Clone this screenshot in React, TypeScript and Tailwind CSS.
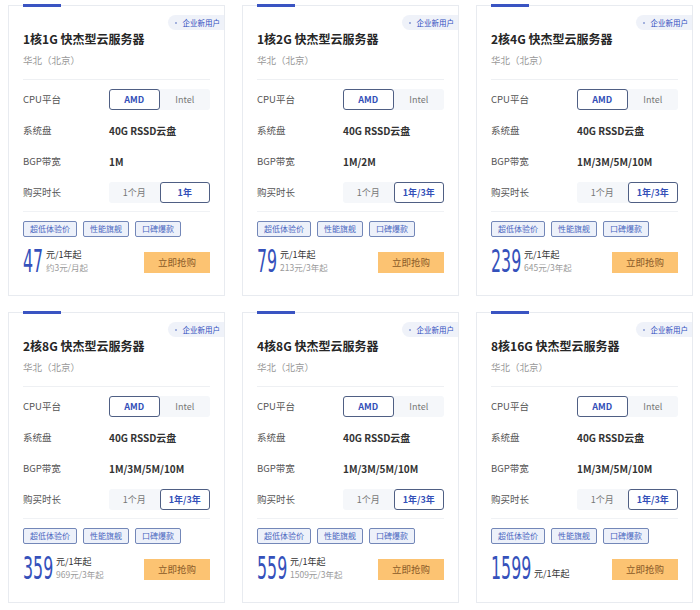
import React from "react";

type Plan = {
  title: string;
  bandwidth: string;
  term: string;
  price: string;
  sub: string;
};

const plans: Plan[] = [
  { title: "1核1G 快杰型云服务器", bandwidth: "1M", term: "1年", price: "47", sub: "约3元/月起" },
  { title: "1核2G 快杰型云服务器", bandwidth: "1M/2M", term: "1年/3年", price: "79", sub: "213元/3年起" },
  { title: "2核4G 快杰型云服务器", bandwidth: "1M/3M/5M/10M", term: "1年/3年", price: "239", sub: "645元/3年起" },
  { title: "2核8G 快杰型云服务器", bandwidth: "1M/3M/5M/10M", term: "1年/3年", price: "359", sub: "969元/3年起" },
  { title: "4核8G 快杰型云服务器", bandwidth: "1M/3M/5M/10M", term: "1年/3年", price: "559", sub: "1509元/3年起" },
  { title: "8核16G 快杰型云服务器", bandwidth: "1M/3M/5M/10M", term: "1年/3年", price: "1599", sub: "" },
];

const tags = ["超低体验价", "性能旗舰", "口碑爆款"];

function Toggle({ left, right, active }: { left: string; right: string; active: "left" | "right" }) {
  const on = "border border-[#4f5f84] bg-white text-[#3450b8] font-bold rounded-[3px]";
  const off = "text-[#777] border border-transparent";
  return (
    <div className="flex w-[101px] h-[21px] bg-[#f5f7fa] rounded-[3px] text-[9px]">
      <div className={`flex-1 flex items-center justify-center ${active === "left" ? on : off}`}>{left}</div>
      <div className={`flex-1 flex items-center justify-center ${active === "right" ? on : off}`}>{right}</div>
    </div>
  );
}

function Row({ label, children }: { label: string; children: React.ReactNode }) {
  return (
    <div className="flex items-center h-[31px]">
      <div className="w-[86px] shrink-0 text-[9.5px] text-[#555]">{label}</div>
      {children}
    </div>
  );
}

function Card({ plan }: { plan: Plan }) {
  return (
    <div className="relative border border-[#e8ebf0] bg-white px-[14px] pt-[24px] pb-[22px]">
      {/* top accent + badge */}
      <div className="absolute -top-[2px] left-[14px] w-[38px] h-[3px] bg-[#3a54c2]" />
      <div className="absolute top-[9px] right-0 h-[15px] flex items-center pl-[7px] pr-[4px] rounded-l-full bg-[#eff2f9] text-[7.5px] text-[#2f4fbf]">
        <span className="mr-[6px] w-[2px] h-[2px] rounded-full bg-[#8a9bd3]" />
        企业新用户
      </div>

      <div className="h-[18px] leading-[18px] text-[12px] font-bold text-[#262626] whitespace-nowrap">{plan.title}</div>
      <div className="mt-[5px] leading-[14px] text-[9.5px] text-[#9a9a9a]">华北（北京）</div>
      <div className="mt-[12px] h-px bg-[#eef0f3]" />

      <div className="mt-[4px]">
        <Row label="CPU平台">
          <Toggle left="AMD" right="Intel" active="left" />
        </Row>
        <Row label="系统盘">
          <span className="text-[10px] font-bold text-[#333]">40G RSSD云盘</span>
        </Row>
        <Row label="BGP带宽">
          <span className="text-[10px] font-bold text-[#333]">{plan.bandwidth}</span>
        </Row>
        <Row label="购买时长">
          <Toggle left="1个月" right={plan.term} active="right" />
        </Row>
      </div>

      <div className="mt-[3px] h-px bg-[#f0f2f5]" />

      <div className="mt-[9px] flex gap-[6px]">
        {tags.map((t) => (
          <span
            key={t}
            className="h-[16px] px-[6px] flex items-center rounded-[2px] border border-[#7387b8] bg-[#edf1fa] text-[8px] text-[#4a66bf]"
          >
            {t}
          </span>
        ))}
      </div>

      <div className="mt-[12px] flex items-end justify-between">
        <div className="flex items-end h-[24px]">
          <span className="inline-block h-[24px]" style={{ width: `${plan.price.length * 10}px` }}>
            <span className="block origin-left scale-x-[0.55] whitespace-nowrap text-[32px] leading-[24px] text-[#3551bb] font-['DejaVu_Sans_Condensed',sans-serif]">
              {plan.price}
            </span>
          </span>
          <div className="ml-[3px] flex flex-col">
            <span className="leading-[12px] text-[9px] text-[#333]">元/1年起</span>
            <span className="leading-[12px] text-[8.5px] text-[#9a9a9a]">{plan.sub}</span>
          </div>
        </div>
        <button className="w-[66px] h-[21px] flex items-center justify-center bg-[#fcc372] text-[9.5px] text-[#8a5a28]">
          立即抢购
        </button>
      </div>
    </div>
  );
}

export default function App() {
  return (
    <div className="w-[700px] h-[610px] bg-white pl-[8px] pr-[7px] pt-[5px] font-['Noto_Sans_CJK_SC','Noto_Sans',sans-serif]">
      <div className="grid grid-cols-3 gap-x-[17px] gap-y-[16px]">
        {plans.map((p) => (
          <Card key={p.title} plan={p} />
        ))}
      </div>
    </div>
  );
}
